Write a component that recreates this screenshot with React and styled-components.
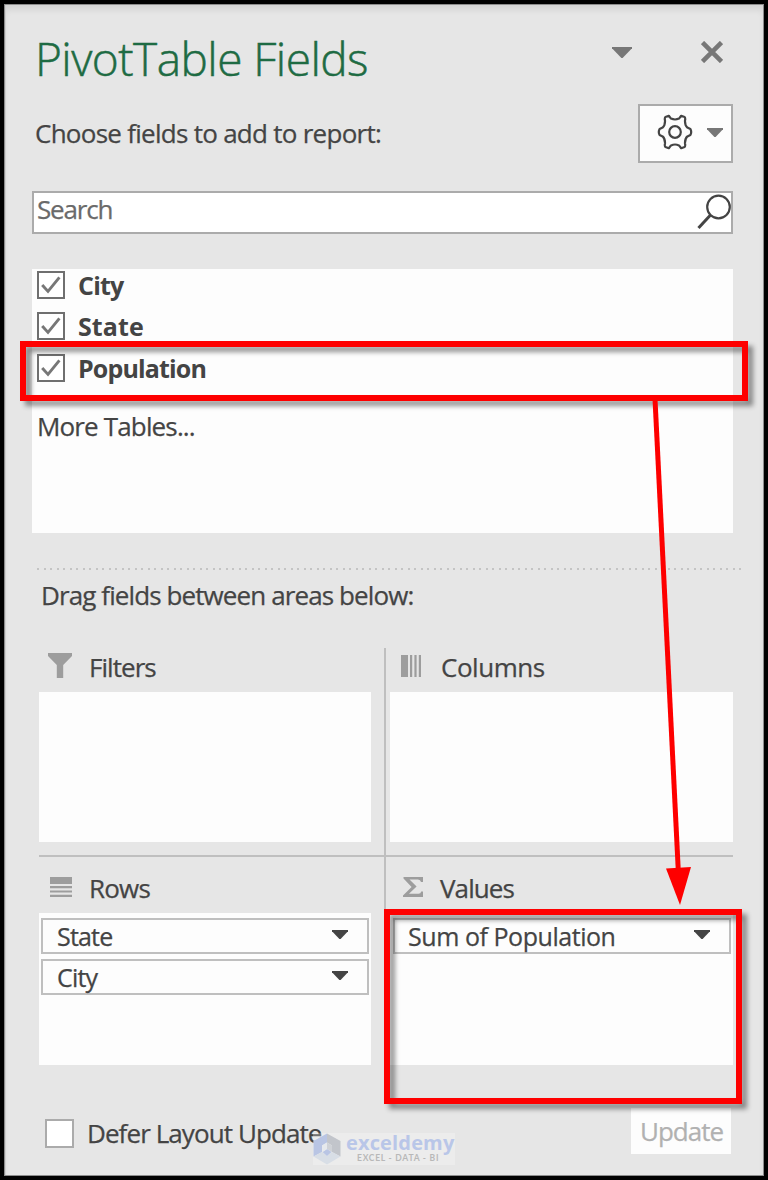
import styled, { createGlobalStyle } from "styled-components";

const GlobalStyle = createGlobalStyle`
  * {
    box-sizing: border-box;
  }

  body {
    margin: 0;
    background: #000;
    font-family: "Open Sans", "Noto Sans", sans-serif;
    font-size: 26px;
    color: #444;
  }

  svg {
    display: block;
    flex: none;
  }
`;

/**
 * Pane
 * Outer frame with the black outline
 */
const Pane = styled.div`
  position: relative;
  display: flex;
  flex-direction: column;
  width: 768px;
  height: 1180px;
  padding-left: 28px;
  border: 4px solid #000;
  background: #e6e6e6;
  box-shadow: inset 1px 1px 0 #8c8c8c, inset -1px -1px 0 #8c8c8c,
    inset 2px 0 0 #cfcfcf, inset 0 6px 6px rgba(0, 0, 0, 0.08);
`;

/** Single line of text, letter spacing is set by `$track` */
const Text = styled.span`
  font-size: ${p => p.$size || 26}px;
  line-height: 36px;
  font-weight: ${p => (p.$bold ? 700 : 400)};
  letter-spacing: ${p => p.$track || 0}px;
  -webkit-text-stroke: ${p => (p.$bold ? 0 : 0.25)}px currentColor;
  white-space: pre;
`;

const Header = styled.header`
  display: flex;
  height: 100px;
  width: 701px;
  padding-left: 3px;
`;

const Title = styled.h1`
  flex: 1;
  margin: 24px 0 0;
  font-size: 46px;
  line-height: 60px;
  font-weight: 300;
  letter-spacing: -0.55px;
  -webkit-text-stroke: 0.5px currentColor;
  color: #1e6b43;
`;

const HeaderButtons = styled.div`
  display: flex;
  align-items: center;
  gap: 69px;
  height: 22px;
  margin: 37px 10px 0 0;
`;

const ReportRow = styled.div`
  display: flex;
  justify-content: space-between;
  align-items: center;
  width: 701px;
  height: 59px;
  padding-left: 3px;

  > ${Text} {
    margin-bottom: 2px;
  }
`;

const GearButton = styled.div`
  display: flex;
  align-items: center;
  gap: 14px;
  width: 95px;
  height: 59px;
  padding: 0 0 3px 17px;
  border: 2px solid #ababab;
  background: #fdfdfd;
`;

const SearchBox = styled.div`
  display: flex;
  justify-content: space-between;
  width: 701px;
  height: 43px;
  margin-top: 28px;
  padding-left: 3px;
  border: 2px solid #ababab;
  background: #fff;
  color: #6a6a6a;

  ${Text} {
    line-height: 33px;
  }
`;

/**
 * Field list
 */
const FieldList = styled.div`
  display: flex;
  flex-direction: column;
  width: 701px;
  height: 264px;
  margin-top: 35px;
  padding: 2px 5px;
  background: #fdfdfd;
`;

const FieldRow = styled.div`
  display: flex;
  align-items: center;
  gap: 13px;
  height: 28px;
  margin-bottom: 13.4px;
`;

const CheckSquare = styled.span`
  display: flex;
  align-items: center;
  justify-content: center;
  width: ${p => p.$size || 28}px;
  height: ${p => p.$size || 28}px;
  border: 2px solid ${p => p.$line || "#6f6f6f"};
  background: #fff;
`;

const MoreTables = styled.div`
  display: flex;
  margin-top: 13px;
`;

const DottedLine = styled.div`
  width: 709px;
  height: 2px;
  margin: 35px 0 0 4.5px;
  background: repeating-linear-gradient(to right, #c4c4c4 0 2.4px, transparent 2.4px 6.5px);
`;

const DragLabel = styled.div`
  display: flex;
  margin: 7px 0 0 9px;
`;

/**
 * Areas
 * Filters / Columns / Rows / Values
 */
const Areas = styled.div`
  display: grid;
  grid-template-columns: 347px 347px;
  grid-template-rows: 209px 208px;
  width: 694px;
  margin: 35px 0 0 7px;
`;

const Area = styled.section`
  display: flex;
  flex-direction: column;
  padding: ${p => (p.$left ? "0 13px 0 0" : "0 0 0 4px")};
  border-right: ${p => (p.$left ? "2px solid #bfbfbf" : "0")};
  border-bottom: ${p => (p.$top ? "2px solid #bfbfbf" : "0")};
`;

const AreaHead = styled.div`
  display: flex;
  align-items: center;
  gap: ${p => p.$gap || 20}px;
  height: ${p => (p.$top ? 44 : 56)}px;
  padding: ${p => (p.$top ? "0 0 7px" : "5px 0 0")} ${p => p.$indent || 10}px;

  svg {
    margin-bottom: 2px;
  }
`;

const DropZone = styled.div`
  display: flex;
  flex-direction: column;
  gap: 5px;
  height: ${p => (p.$top ? 150 : 152)}px;
  padding: 5px 2px 0 ${p => p.$inset || 2}px;
  background: #fdfdfd;
`;

const FieldItem = styled.div`
  display: flex;
  justify-content: space-between;
  align-items: center;
  height: 36px;
  padding: 0 19px 0 ${p => p.$indent || 14}px;
  border: 2px solid #bfbfbf;

  svg {
    margin-bottom: 3px;
  }
`;

const Footer = styled.footer`
  display: flex;
  align-items: center;
  width: 699px;
  height: 46px;
  margin-top: 43px;
  padding-left: 13px;
`;

const DeferOption = styled.div`
  display: flex;
  align-items: center;
  gap: 13px;
  padding-top: 4px;
`;

const UpdateButton = styled.div`
  display: flex;
  align-items: center;
  width: 100px;
  height: 46px;
  margin-left: auto;
  padding-left: 9px;
  background: #fdfdfd;
  color: #b1b1b1;
`;

/**
 * Watermark
 */
const Watermark = styled.div`
  position: absolute;
  left: 309px;
  top: 1129px;
  display: flex;
  gap: 5px;
  width: 142px;
  height: 32px;
  background: rgba(255, 255, 255, 0.25);
`;

const Brand = styled.div`
  display: flex;
  flex-direction: column;
`;

const BrandName = styled.span`
  font-size: 20px;
  line-height: 20px;
  font-weight: 700;
  letter-spacing: 0.15px;
  color: #b9c6e8;
`;

const BrandTag = styled.span`
  margin-left: 11px;
  font-family: Lato, sans-serif;
  font-size: 8.5px;
  line-height: 11px;
  font-weight: 700;
  letter-spacing: 0.75px;
  white-space: pre;
  color: #b8b8b8;
`;

/** Red box laid over the pane */
const Highlight = styled.div`
  position: absolute;
  left: ${p => p.$x - 4}px;
  top: ${p => p.$y - 4}px;
  width: ${p => p.$w}px;
  height: ${p => p.$h}px;
  border: 6px solid #fe0000;
  filter: drop-shadow(5px 5px 2.5px rgba(0, 0, 0, 0.42));
`;

const ArrowLayer = styled.svg`
  position: absolute;
  left: 636px;
  top: 391px;
`;

const Caret = ({ w = 16, h = 9, color = "#444" }) => (
  <svg width={w} height={h} viewBox={`0 0 ${w} ${h}`}>
    <path d={`M0 0H${w}V1.2L${w / 2 + 0.6} ${h}H${w / 2 - 0.6}L0 1.2Z`} fill={color} />
  </svg>
);

const CloseIcon = () => (
  <svg width="22" height="22" viewBox="0 0 22 22" stroke="#777" strokeWidth="4.6">
    <path d="M1.5 1.5L20.5 20.5M20.5 1.5L1.5 20.5" />
  </svg>
);

const GearIcon = () => (
  <svg width="36" height="36" viewBox="0 0 36 36" fill="none" stroke="#444" strokeWidth="2.2" strokeLinejoin="round">
    <path d="M8.4 3L11.8 1.8L14 4.6Q18 6.4 22 4.6L24.2 1.8L27.6 3Q28.6 4 28 6.6Q27.8 11.4 30.4 13.6L33.4 15Q35 18 33.4 21L30.4 22.4Q27.8 24.6 28 29.4Q28.6 32 27.6 33L24.2 34.2L22 31.4Q18 29.6 14 31.4L11.8 34.2L8.4 33Q7.4 32 8 29.4Q8.2 24.6 5.6 22.4L2.6 21Q1 18 2.6 15L5.6 13.6Q8.2 11.4 8 6.6Q7.4 4 8.4 3Z" />
    <circle cx="18" cy="18" r="5.8" />
  </svg>
);

const SearchIcon = () => (
  <svg width="35" height="39" viewBox="0 0 35 39" fill="none" stroke="#444">
    <circle cx="22.5" cy="14" r="11.3" strokeWidth="2.2" />
    <path d="M14.5 22L2.5 35" strokeWidth="3" />
  </svg>
);

const Check = () => (
  <svg width="20" height="18" viewBox="0 0 20 18" fill="none" stroke="#777" strokeWidth="2.9">
    <path d="M1.2 9L7 15.4L18.4 1.4" />
  </svg>
);

const FunnelIcon = () => (
  <svg width="24" height="25" viewBox="0 0 24 25" fill="#9d9d9d">
    <path d="M0 0H24V3L15.2 12V25H8.8V12L0 3Z" />
  </svg>
);

const ColumnsIcon = () => (
  <svg width="20" height="22" viewBox="0 0 20 22" fill="#9d9d9d">
    <path d="M0 0H7V22H0ZM9 0H11.2V22H9ZM13.4 0H15.6V22H13.4ZM17.8 0H20V22H17.8Z" />
  </svg>
);

const RowsIcon = () => (
  <svg width="22" height="20" viewBox="0 0 22 20" fill="#9d9d9d">
    <path d="M0 0H22V7H0ZM0 9H22V11.2H0ZM0 13.4H22V15.6H0ZM0 17.8H22V20H0Z" />
  </svg>
);

const SigmaIcon = () => (
  <svg width="20" height="20" viewBox="0 0 20 20" fill="#9d9d9d">
    <path d="M0.5 0H20V5H18Q17.5 2.4 15 2.4H6.5L13.6 9.4L6 16.8H15.5Q17.8 16.8 18.2 14.4H20V20H0V18.4L8.6 10L0.5 1.6Z" />
  </svg>
);

const BrandLogo = () => (
  <svg width="28" height="32" viewBox="0 0 28 32">
    <path d="M14 0.5L0.5 8V23.5L9 19V12.5L14 9.5Z" fill="#b9c5e4" />
    <path d="M14 0.5L27.5 8V23.5L19 19V12.5L14 9.5Z" fill="#c2c5cb" />
    <path d="M0.5 23.5L9 19L14 23L19 19L27.5 23.5L14 31.5Z" fill="#d8dee6" />
    <path d="M14 9.5L19 12.5V19L14 16Z" fill="#cfd2d7" />
    <path d="M14 16L18.5 19L14 23L9.5 19Z" fill="#b9c5e4" />
    <path d="M14 9.5V16L9.5 19L9 12.5Z" fill="#e6e9ed" />
  </svg>
);

const fields = [
  { name: "City", track: -0.8 },
  { name: "State", track: 0.1 },
  { name: "Population", track: -0.85 }
];

export default function App() {
  return (
    <>
      <GlobalStyle />
      <Pane>
        <Header>
          <Title>PivotTable Fields</Title>
          <HeaderButtons>
            <Caret w={20} h={11} color="#777" />
            <CloseIcon />
          </HeaderButtons>
        </Header>

        <ReportRow>
          <Text $track={-0.73}>Choose fields to add to report:</Text>
          <GearButton>
            <GearIcon />
            <Caret color="#777" />
          </GearButton>
        </ReportRow>

        <SearchBox>
          <Text $track={-1.2}>Search</Text>
          <SearchIcon />
        </SearchBox>

        <FieldList>
          {fields.map(field => (
            <FieldRow key={field.name}>
              <CheckSquare>
                <Check />
              </CheckSquare>
              <Text $bold $size={25} $track={field.track}>{field.name}</Text>
            </FieldRow>
          ))}
          <MoreTables>
            <Text $track={-0.85}>More Tables...</Text>
          </MoreTables>
        </FieldList>

        <DottedLine />
        <DragLabel>
          <Text $track={-0.9}>Drag fields between areas below:</Text>
        </DragLabel>

        <Areas>
          <Area $left $top>
            <AreaHead $top $gap={17} $indent={9}>
              <FunnelIcon />
              <Text $track={-0.95}>Filters</Text>
            </AreaHead>
            <DropZone $top />
          </Area>
          <Area $top>
            <AreaHead $top $indent={11}>
              <ColumnsIcon />
              <Text $track={-0.45}>Columns</Text>
            </AreaHead>
            <DropZone $top />
          </Area>
          <Area $left>
            <AreaHead $gap={17} $indent={11}>
              <RowsIcon />
              <Text $track={-0.8}>Rows</Text>
            </AreaHead>
            <DropZone>
              <FieldItem>
                <Text $size={25} $track={-0.8}>State</Text>
                <Caret />
              </FieldItem>
              <FieldItem>
                <Text $size={25} $track={-0.8}>City</Text>
                <Caret />
              </FieldItem>
            </DropZone>
          </Area>
          <Area>
            <AreaHead $gap={17} $indent={13}>
              <SigmaIcon />
              <Text $track={-0.9}>Values</Text>
            </AreaHead>
            <DropZone $inset={3}>
              <FieldItem $indent={13}>
                <Text $size={25} $track={-0.45}>Sum of Population</Text>
                <Caret />
              </FieldItem>
            </DropZone>
          </Area>
        </Areas>

        <Footer>
          <DeferOption>
            <CheckSquare $size={29} $line="#ababab" />
            <Text $track={-0.92}>Defer Layout Update</Text>
          </DeferOption>
          <UpdateButton>
            <Text $track={-1}>Update</Text>
          </UpdateButton>
        </Footer>

        <Watermark>
          <BrandLogo />
          <Brand>
            <BrandName>exceldemy</BrandName>
            <BrandTag>EXCEL - DATA - BI</BrandTag>
          </Brand>
        </Watermark>

        <Highlight $x={20} $y={341} $w={728} $h={60} />
        <Highlight $x={384} $y={909} $w={358} $h={195} />
        <ArrowLayer width="70" height="515" viewBox="0 0 70 515">
          <path d="M15 4L38.5 480" stroke="#fe0000" strokeWidth="5" />
          <path d="M26 473.5L51 472L40 510Z" fill="#fe0000" />
        </ArrowLayer>
      </Pane>
    </>
  );
}
